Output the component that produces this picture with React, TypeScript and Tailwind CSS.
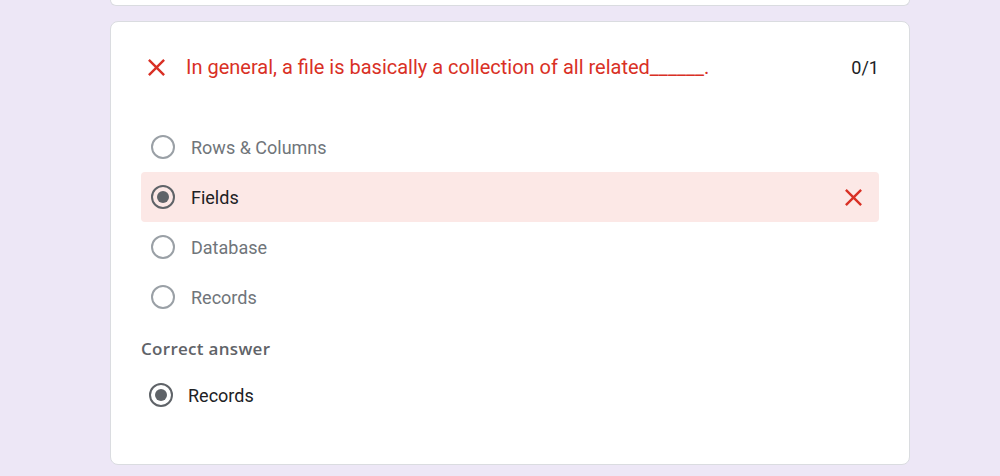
import React from "react";

const CloseIcon = ({ className }: { className?: string }) => (
  <svg viewBox="0 0 24 24" className={className} fill="currentColor">
    <path d="M19 6.41L17.59 5 12 10.59 6.41 5 5 6.41 10.59 12 5 17.59 6.41 19 12 13.41 17.59 19 19 17.59 13.41 12z" />
  </svg>
);

const Radio = ({ checked }: { checked?: boolean }) => (
  <div
    className={`w-[24px] h-[24px] rounded-full border-2 flex items-center justify-center shrink-0 ${
      checked ? "border-[#5f6368]" : "border-[#9aa0a6]"
    }`}
  >
    {checked && <div className="w-[12px] h-[12px] rounded-full bg-[#5f6368]" />}
  </div>
);

export default function App() {
  const options = ["Rows & Columns", "Fields", "Database", "Records"];
  return (
    <div
      className="w-[1000px] h-[476px] bg-[#ede7f6] overflow-hidden flex flex-col"
      style={{ fontFamily: "Roboto, 'Liberation Sans', sans-serif" }}
    >
      <div className="ml-[110px] w-[800px] h-[6px] bg-white border border-t-0 border-[#dadce0] rounded-b-lg shrink-0" />
      <div className="ml-[110px] mt-[15px] w-[800px] h-[444px] bg-white border border-[#dadce0] rounded-lg shrink-0 px-[30px] pt-[33px]">
        <div className="flex items-center h-[24px]">
          <CloseIcon className="w-[29px] h-[29px] text-[#d93025] ml-[1px]" />
          <div className="ml-[15px] text-[20px] text-[#d93025] flex-1">
            In general, a file is basically a collection of all related______.
          </div>
          <div className="text-[18px] text-[#202124]">0/1</div>
        </div>
        <div className="mt-[43px] flex flex-col">
          {options.map((o) => {
            const sel = o === "Fields";
            return (
              <div
                key={o}
                className={`h-[50px] flex items-center pl-[10px] pr-[11px] rounded ${
                  sel ? "bg-[#fce8e6]" : ""
                }`}
              >
                <Radio checked={sel} />
                <div
                  className={`ml-[16px] text-[18px] flex-1 ${
                    sel ? "text-[#202124]" : "text-[#70757a]"
                  }`}
                >
                  {o}
                </div>
                {sel && <CloseIcon className="w-[29px] h-[29px] text-[#d93025]" />}
              </div>
            );
          })}
        </div>
        <div
          className="mt-[15px] text-[17px] font-semibold tracking-[0.3px] text-[#5f6368] leading-[24px]"
          style={{ fontFamily: "'Open Sans', Roboto, sans-serif" }}
        >
          Correct answer
        </div>
        <div className="mt-[9px] h-[50px] flex items-center pl-[8px]">
          <Radio checked />
          <div className="ml-[15px] text-[18px] text-[#202124]">Records</div>
        </div>
      </div>
    </div>
  );
}
